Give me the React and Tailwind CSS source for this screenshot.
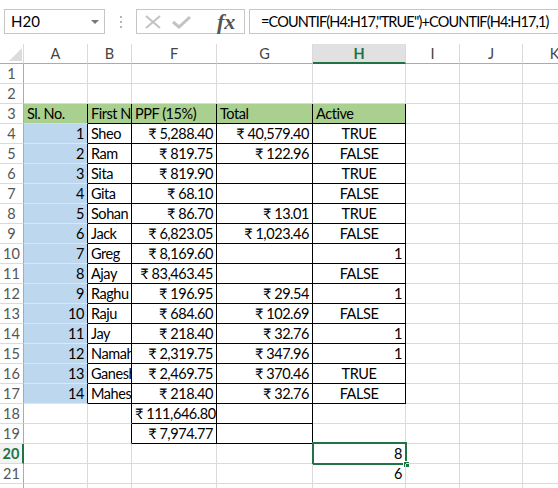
const COLS = ['A', 'B', 'F', 'G', 'H', 'I', 'J', 'K'];

const people = [
  ['1', 'Sheo', '₹ 5,288.40', '₹ 40,579.40', 'TRUE'],
  ['2', 'Ram', '₹ 819.75', '₹ 122.96', 'FALSE'],
  ['3', 'Sita', '₹ 819.90', '', 'TRUE'],
  ['4', 'Gita', '₹ 68.10', '', 'FALSE'],
  ['5', 'Sohan', '₹ 86.70', '₹ 13.01', 'TRUE'],
  ['6', 'Jack', '₹ 6,823.05', '₹ 1,023.46', 'FALSE'],
  ['7', 'Greg', '₹ 8,169.60', '', '1'],
  ['8', 'Ajay', '₹ 83,463.45', '', 'FALSE'],
  ['9', 'Raghu', '₹ 196.95', '₹ 29.54', '1'],
  ['10', 'Raju', '₹ 684.60', '₹ 102.69', 'FALSE'],
  ['11', 'Jay', '₹ 218.40', '₹ 32.76', '1'],
  ['12', 'Namah', '₹ 2,319.75', '₹ 347.96', '1'],
  ['13', 'Ganesh', '₹ 2,469.75', '₹ 370.46', 'TRUE'],
  ['14', 'Mahesh', '₹ 218.40', '₹ 32.76', 'FALSE'],
];

// cell text + alignment for a given row / column
function cellValue(r, c) {
  if (r === 3) {
    const head = { A: 'Sl. No.', B: 'First Name', F: 'PPF (15%)', G: 'Total', H: 'Active' };
    return head[c] ? { text: head[c], align: 'left' } : null;
  }
  if (r >= 4 && r <= 17) {
    const p = people[r - 4];
    if (c === 'A') return { text: p[0], align: 'right' };
    if (c === 'B') return { text: p[1], align: 'left' };
    if (c === 'F') return { text: p[2], align: 'right' };
    if (c === 'G') return p[3] ? { text: p[3], align: 'right' } : null;
    if (c === 'H') {
      const isNum = p[4] === '1';
      return { text: p[4], align: isNum ? 'right' : 'center' };
    }
  }
  if (r === 18 && c === 'F') return { text: '₹ 111,646.80', align: 'right' };
  if (r === 19 && c === 'F') return { text: '₹ 7,974.77', align: 'right' };
  if (r === 20 && c === 'H') return { text: '8', align: 'right' };
  if (r === 21 && c === 'H') return { text: '6', align: 'right' };
  return null;
}

function boxed(r, c) {
  if (r >= 3 && r <= 17 && ['B', 'F', 'G', 'H'].includes(c)) return true;
  if ((r === 18 || r === 19) && (c === 'F' || c === 'G')) return true;
  return false;
}

function clsx(...a) {
  return a.filter(Boolean).join(' ');
}

function Cell({ r, c, i }) {
  const next = COLS[i + 1];
  const rightBlack = boxed(r, c) || (next && boxed(r, next));
  const bottomBlack = boxed(r, c) || (r + 1 !== 3 && boxed(r + 1, c));
  const green = r === 3 && i <= 4;
  const blue = c === 'A' && r >= 4 && r <= 17;
  const v = cellValue(r, c);
  const selected = r === 20 && c === 'H';

  return (
    <div
      className={clsx(
        'relative h-[20px] border-r border-b whitespace-nowrap overflow-hidden px-[3px] leading-[20px] text-[14.5px] tracking-[-0.45px] text-black',
        rightBlack ? 'border-r-black' : blue ? 'border-r-[#d3e2f1]' : green ? 'border-r-[#c2dcae]' : 'border-r-[#dadada]',
        bottomBlack ? 'border-b-black' : blue ? 'border-b-[#dbe7f3]' : 'border-b-[#dadada]',
        green && 'bg-[#a9d08e]',
        blue && 'bg-[#bdd7ee]',
        v && v.align === 'right' && 'text-right',
        v && v.align === 'center' && 'text-center',
        selected && 'overflow-visible'
      )}
    >
      {v ? v.text : ''}
      {selected && (
        <>
          <div className="absolute left-[-1px] top-[-2px] right-[-2px] bottom-[-2px] border-2 border-[#217346] pointer-events-none" />
          <div className="absolute right-[-5px] bottom-[-5px] w-[7px] h-[7px] bg-[#217346] border border-white" />
        </>
      )}
    </div>
  );
}

function Row({ r }) {
  const sel = r === 20;
  return (
    <>
      <div
        className={clsx(
          'h-[20px] border-b border-b-[#dadada] text-center text-[14.5px] leading-[20px]',
          sel ? 'border-r-2 border-r-[#217346] text-[#217346] font-bold bg-[#f3f3f3]' : 'border-r border-r-[#ababab] text-[#555]'
        )}
      >
        {r}
      </div>
      {COLS.map((c, i) => (
        <Cell key={c} r={r} c={c} i={i} />
      ))}
    </>
  );
}

export default function App() {
  const rows = Array.from({ length: 22 }, (_, k) => k + 1);

  return (
    <div className="w-[558px] h-[488px] overflow-hidden bg-white" style={{ fontFamily: 'Lato, "Noto Sans", "DejaVu Sans", sans-serif' }}>
      {/* formula bar */}
      <div className="h-[44px] flex items-start">
        <div className="ml-[4px] mt-[9px] w-[101px] h-[25px] border border-[#c6c6c6] flex items-center justify-between pl-[6px] pr-[5px]">
          <span className="text-[15px] text-black">H20</span>
          <span className="w-0 h-0 border-l-[4px] border-r-[4px] border-t-[4px] border-l-transparent border-r-transparent border-t-[#777]" />
        </div>
        <div className="w-[31px] h-[44px] flex flex-col items-center justify-start pt-[16px] gap-[3px]">
          <span className="w-[2px] h-[2px] bg-[#b5b5b5]" />
          <span className="w-[2px] h-[2px] bg-[#b5b5b5]" />
          <span className="w-[2px] h-[2px] bg-[#b5b5b5]" />
        </div>
        <div className="mt-[9px] w-[109px] h-[25px] border border-[#c6c6c6] flex items-center">
          <svg className="ml-[8px]" width="16" height="14" viewBox="0 0 16 14">
            <path d="M1 1 L15 13 M15 1 L1 13" stroke="#c3c3c3" strokeWidth="2" fill="none" />
          </svg>
          <svg className="ml-[11px]" width="19" height="14" viewBox="0 0 19 14">
            <path d="M1 7 L7 12 L18 2" stroke="#c3c3c3" strokeWidth="3" fill="none" />
          </svg>
          <span
            className="ml-[26px] text-[22px] italic font-bold text-[#555] leading-none"
            style={{ fontFamily: '"Liberation Serif", "DejaVu Serif", serif' }}
          >
            fx
          </span>
        </div>
        <div className="ml-[4px] mt-[9px] flex-1 h-[25px] border border-[#c6c6c6] border-r-0 flex items-center pl-[11px] text-[14.5px] tracking-[-0.85px] text-black whitespace-nowrap overflow-hidden">
          =COUNTIF(H4:H17,"TRUE")+COUNTIF(H4:H17,1)
        </div>
      </div>

      {/* sheet */}
      <div className="grid grid-cols-[24px_64px_44px_85px_96px_93px_54px_63px_64px]">
        {/* column header row */}
        <div className="relative h-[20px] border-r border-b border-b-[#ababab] border-r-[#dadada]">
          <svg className="absolute left-[9px] top-[4px]" width="13" height="13" viewBox="0 0 13 13">
            <path d="M13 0 L13 13 L0 13 Z" fill="#dcdcdc" />
          </svg>
        </div>
        {COLS.map((c) => (
          <div
            key={c}
            className={clsx(
              'h-[20px] border-r border-r-[#dadada] text-center text-[14.5px] leading-[19px]',
              c === 'H' ? 'bg-[#e1e1e1] border-b-2 border-b-[#217346] text-[#217346] font-bold' : 'border-b border-b-[#ababab] text-[#444]'
            )}
          >
            {c}
          </div>
        ))}

        {rows.map((r) => (
          <Row key={r} r={r} />
        ))}
      </div>
    </div>
  );
}
